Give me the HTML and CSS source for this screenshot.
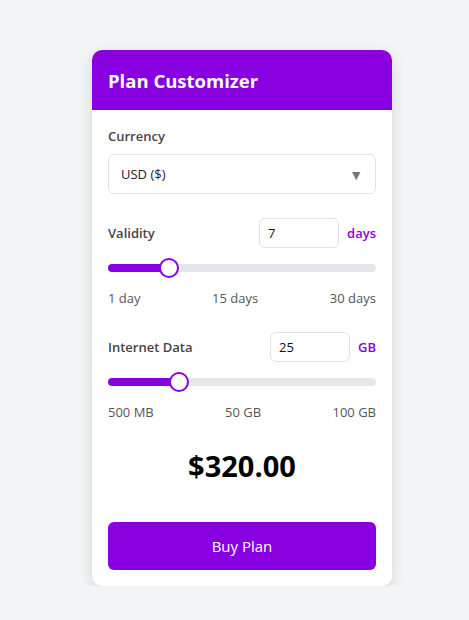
FILE: index.html
```html
<!DOCTYPE html>
<html>
<head>
<meta charset="utf-8">
<link rel="stylesheet" href="styles.css">
</head>
<body>
<div class="card">
  <div class="card-header"><h1 class="title">Plan Customizer</h1></div>
  <div class="card-body">
    <div class="field">
      <label class="label">Currency</label>
      <div class="select">
        <span>USD ($)</span>
        <span class="caret">▼</span>
      </div>
    </div>

    <div class="field slider-field">
      <div class="row">
        <span class="label">Validity</span>
        <div class="value-box">
          <input class="num" type="text" value="7">
          <span class="unit">days</span>
        </div>
      </div>
      <input class="range" type="range" min="1" max="30" value="7" style="--p: 20.7%">
      <div class="ticks"><span>1 day</span><span>15 days</span><span>30 days</span></div>
    </div>

    <div class="field slider-field">
      <div class="row">
        <span class="label">Internet Data</span>
        <div class="value-box">
          <input class="num" type="text" value="25">
          <span class="unit">GB</span>
        </div>
      </div>
      <input class="range" type="range" min="0.5" max="100" step="0.5" value="25" style="--p: 24.6%">
      <div class="ticks"><span>500 MB</span><span>50 GB</span><span>100 GB</span></div>
    </div>

    <div class="price">$320.00</div>

    <button class="buy">Buy Plan</button>
  </div>
</div>
</body>
</html>
```

FILE: styles.css
```css
* { box-sizing: border-box; }
html, body { margin: 0; padding: 0; }
body {
  background: #f3f4f6;
  font-family: "Open Sans", "Noto Sans", sans-serif;
  padding-top: 50px;
  padding-left: 15px;
  display: flex;
  justify-content: center;
}
.card {
  width: 300px;
  background: #fff;
  border-radius: 10px;
  overflow: hidden;
  box-shadow: 0 4px 14px rgba(0,0,0,0.12);
}
.card-header {
  background: #8800e0;
  height: 60px;
  display: flex;
  align-items: center;
  padding: 0 16px;
}
.title {
  margin: 0;
  color: #fff;
  font-size: 18.5px;
  font-weight: 700;
}
.card-body {
  padding: 16px;
  display: flex;
  flex-direction: column;
}
.field { display: flex; flex-direction: column; }
.label {
  font-size: 13px;
  font-weight: 600;
  color: #444;
  line-height: 20px;
}
.select {
  margin-top: 8px;
  height: 40px;
  border: 1px solid #e2e2e6;
  border-radius: 6px;
  display: flex;
  align-items: center;
  justify-content: space-between;
  padding: 0 12px;
  font-size: 13px;
  color: #222;
}
.caret { color: #777; font-size: 14px; }
.slider-field { margin-top: 24px; }
.slider-field + .slider-field { margin-top: 24px; }
.row {
  display: flex;
  align-items: center;
  justify-content: space-between;
  height: 30px;
}
.value-box { display: flex; align-items: center; gap: 8px; }
.num {
  width: 80px;
  height: 30px;
  border: 1px solid #e2e2e6;
  border-radius: 6px;
  padding: 0 8px;
  font-family: inherit;
  font-size: 13px;
  color: #111;
  outline: none;
}
.unit {
  color: #8800e0;
  font-weight: 600;
  font-size: 13px;
}
.range {
  -webkit-appearance: none;
  appearance: none;
  width: 100%;
  height: 8px;
  margin: 16px 0 0;
  border-radius: 4px;
  background: linear-gradient(to right, #8800e0 0, #8800e0 calc(10px + var(--p) * 0.925), #e5e5ea calc(10px + var(--p) * 0.925));
  outline: none;
}
.range::-webkit-slider-thumb {
  -webkit-appearance: none;
  appearance: none;
  width: 20px;
  height: 20px;
  border-radius: 50%;
  background: #fff;
  border: 2px solid #8800e0;
}
.ticks {
  margin-top: 16px;
  display: flex;
  justify-content: space-between;
  font-size: 13px;
  color: #555;
  line-height: 20px;
}
.price {
  margin-top: 26px;
  text-align: center;
  font-size: 29px;
  font-weight: 700;
  color: #000;
  line-height: 36px;
}
.buy {
  margin-top: 38px;
  height: 48px;
  border: none;
  border-radius: 6px;
  background: #8800e0;
  color: #fff;
  font-family: inherit;
  font-size: 15px;
}
```
